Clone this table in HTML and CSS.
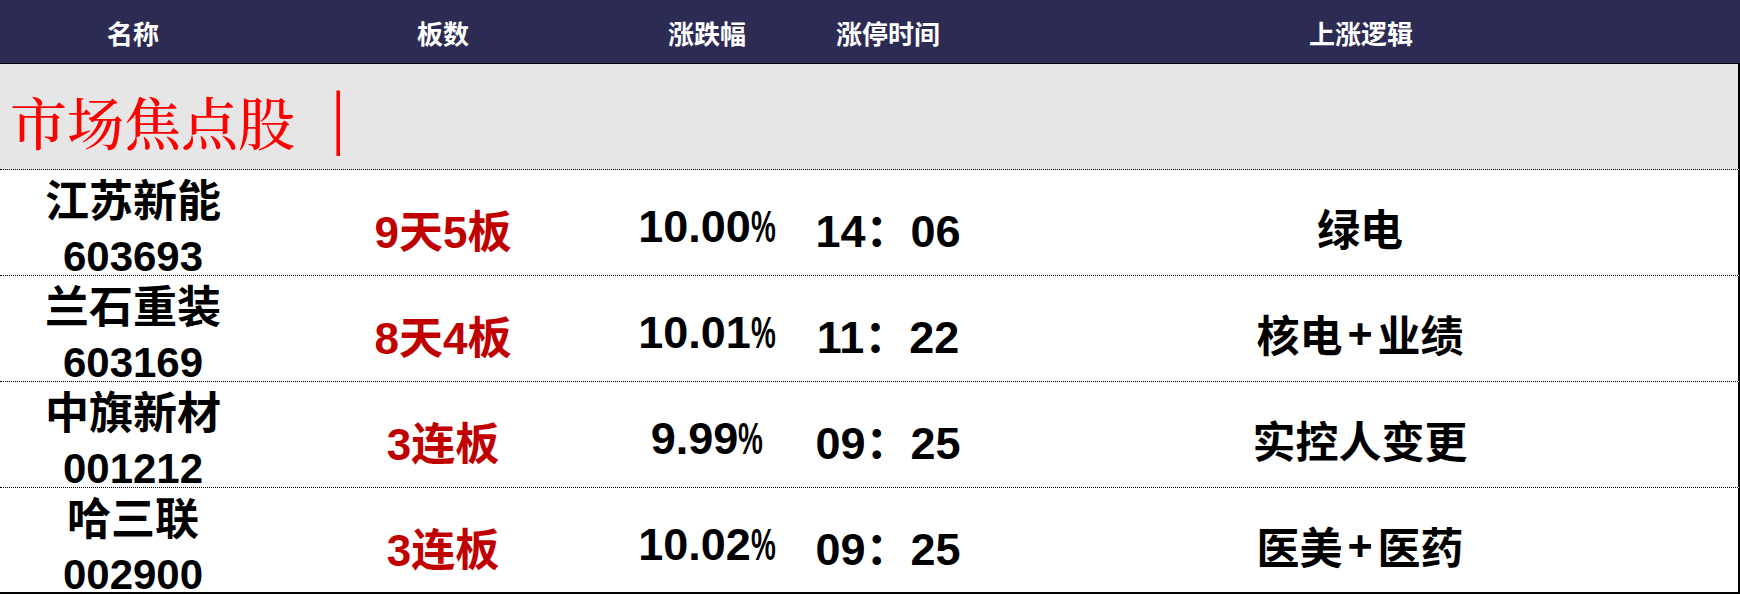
FILE: index.html
```html
<!DOCTYPE html>
<html lang="zh-CN">
<head>
<meta charset="utf-8">
<title>市场焦点股</title>
<link rel="stylesheet" href="styles.css">
</head>
<body>
<div class="board">
  <div class="head grid">
    <div class="cell">名称</div>
    <div class="cell">板数</div>
    <div class="cell">涨跌幅</div>
    <div class="cell">涨停时间</div>
    <div class="cell">上涨逻辑</div>
  </div>
  <div class="band">
    <span class="band-title">市场焦点股</span><span class="band-bar">|</span>
  </div>
  <div class="row grid">
    <div class="cell name"><span class="cn">江苏新能</span><span class="code">603693</span></div>
    <div class="cell boards">9天5板</div>
    <div class="cell pct">10.00<span class="pc">%</span></div>
    <div class="cell time">14：06</div>
    <div class="cell logic">绿电</div>
  </div>
  <div class="row grid">
    <div class="cell name"><span class="cn">兰石重装</span><span class="code">603169</span></div>
    <div class="cell boards">8天4板</div>
    <div class="cell pct">10.01<span class="pc">%</span></div>
    <div class="cell time">11：22</div>
    <div class="cell logic">核电<span class="plus">+</span>业绩</div>
  </div>
  <div class="row grid">
    <div class="cell name"><span class="cn">中旗新材</span><span class="code">001212</span></div>
    <div class="cell boards">3连板</div>
    <div class="cell pct">9.99<span class="pc">%</span></div>
    <div class="cell time">09：25</div>
    <div class="cell logic">实控人变更</div>
  </div>
  <div class="row grid last">
    <div class="cell name"><span class="cn">哈三联</span><span class="code">002900</span></div>
    <div class="cell boards">3连板</div>
    <div class="cell pct">10.02<span class="pc">%</span></div>
    <div class="cell time">09：25</div>
    <div class="cell logic">医美<span class="plus">+</span>医药</div>
  </div>
</div>
</body>
</html>
```

FILE: styles.css
```css
* { box-sizing: border-box; }
html, body { margin: 0; padding: 0; background: #ffffff; }
body {
  width: 1740px;
  height: 595px;
  overflow: hidden;
  font-family: "Liberation Sans", Arial, "Noto Sans CJK SC", sans-serif;
}
.board { width: 1740px; }
.grid {
  display: grid;
  grid-template-columns: 266px 354px 174px 188px 1fr;
}
.cell {
  display: flex;
  align-items: center;
  justify-content: center;
  text-align: center;
  white-space: nowrap;
}
.head {
  height: 64px;
  background: #2c2b53;
  border-bottom: 1px solid #000;
  color: #ffffff;
  font-weight: bold;
  font-size: 26px;
  padding-top: 1px;
}
.band {
  height: 106px;
  background: #e6e6e6;
  border-bottom: 1px dotted #000;
  border-right: 2px solid #000;
  display: flex;
  align-items: center;
  padding-left: 10px;
  padding-top: 8px;
  color: #ff0000;
  font-family: "Noto Serif CJK SC", "Liberation Serif", "Noto Sans CJK SC", serif;
  font-size: 57px;
  line-height: 1;
}
.band-title { font-weight: 500; }
.band-bar {
  font-family: "Liberation Serif", serif;
  margin-left: 36px;
  font-size: 72px;
  line-height: 1;
  position: relative;
  top: -4px;
}
.row {
  height: 106px;
  border-bottom: 1px dotted #000;
  border-right: 2px solid #000;
  font-weight: bold;
  color: #000;
}
.row.last {
  height: 106px;
  border-bottom: 2px solid #000;
}
.name {
  flex-direction: column;
  padding-top: 4px;
  line-height: 55px;
}
.name .cn { font-size: 44px; }
.name .code { font-size: 42px; }
.boards {
  color: #c00000;
  font-size: 44px;
  padding-top: 3px;
}
.pct, .time {
  font-size: 45px;
  padding-top: 0;
}
.pc {
  display: inline-block;
  transform: scaleX(0.62);
  transform-origin: left center;
  margin-right: -15px;
}
.logic {
  font-size: 43px;
  padding-top: 0;
}
.plus { margin: 0 5px; }
```
